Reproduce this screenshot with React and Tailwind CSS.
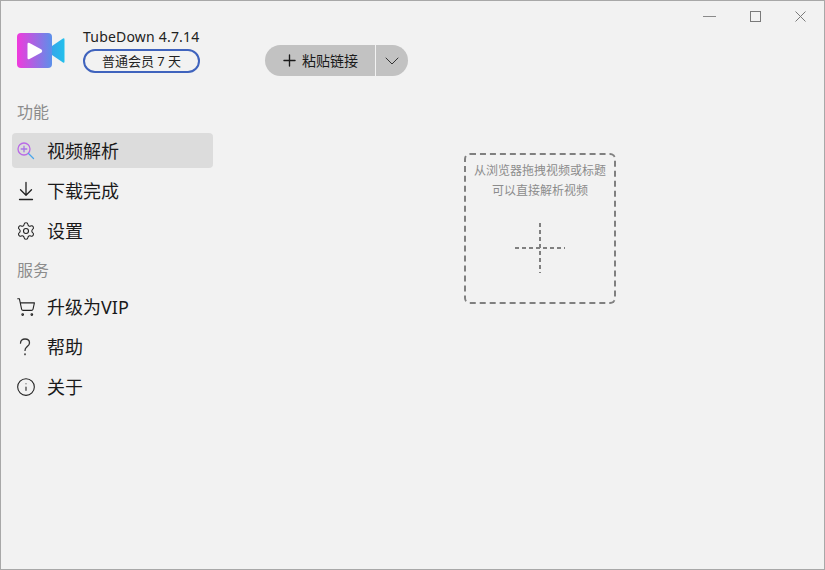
import React from 'react';
import { ChevronDown, Info, Plus, Settings, ShoppingCart } from 'lucide-react';

const font = 'font-["Noto_Sans","Noto_Sans_CJK_SC",sans-serif]';

function Logo() {
    return (
        <svg width="48" height="36" viewBox="0 0 48 36">
            <defs>
                <linearGradient id="logoBody" x1="0" y1="0" x2="1" y2="0">
                    <stop offset="0" stopColor="#f03adc" />
                    <stop offset="1" stopColor="#5b90ea" />
                </linearGradient>
                <linearGradient id="logoLens" x1="0" y1="0" x2="1" y2="0">
                    <stop offset="0" stopColor="#35a6ea" />
                    <stop offset="1" stopColor="#22c0ec" />
                </linearGradient>
            </defs>
            <rect x="0" y="1" width="35" height="35" rx="4" fill="url(#logoBody)" />
            <path d="M35 14 L46 6.5 Q47.5 5.8 47.5 7.5 V29.5 Q47.5 31.2 46 30.5 L35 23 Z" fill="url(#logoLens)" />
            <path d="M10.5 12 Q10.5 10 12.5 11 L24.5 17.5 Q26 19 24.5 20.5 L12.5 27 Q10.5 28 10.5 26 Z" fill="#ffffff" />
        </svg>
    );
}

function SearchPlusIcon() {
    return (
        <svg width="18" height="18" viewBox="0 0 18 18" fill="none" strokeWidth="1.3" strokeLinecap="round">
            <circle cx="7" cy="7" r="6" stroke="#b96ae6" />
            <path d="M4.2 7 H9.8 M7 4.2 V9.8" stroke="#a873e6" />
            <path d="M11.5 11.5 L16.5 16.5" stroke="#4aa6ea" />
        </svg>
    );
}

function DownloadIcon() {
    return (
        <svg width="18" height="20" viewBox="0 0 18 20" fill="none" stroke="#222" strokeWidth="1.3" strokeLinecap="round" strokeLinejoin="round">
            <path d="M9 1.5 V14 M3.5 8.8 L9 14.2 L14.5 8.8 M2.5 18.5 H15.5" />
        </svg>
    );
}

function HelpIcon() {
    return (
        <svg width="14" height="20" viewBox="0 0 14 20" fill="none" stroke="#333" strokeWidth="1.3" strokeLinecap="round" className="ml-px">
            <path d="M2.5 6.2 C2.5 3.4 4.5 2 7 2 C9.6 2 11.5 3.6 11.5 5.9 C11.5 8 10.2 8.9 8.8 9.9 C7.6 10.8 7 11.6 7 13.4" />
            <path d="M7 17 V17.6" strokeWidth="1.6" />
        </svg>
    );
}

function WindowControls() {
    return (
        <div className="flex justify-end items-center h-[31px] pr-[18px] gap-[34px]">
            <svg width="13" height="13" viewBox="0 0 13 13" stroke="#8a8a8a" strokeWidth="1">
                <path d="M0 6.5 H13" />
            </svg>
            <svg width="11" height="11" viewBox="0 0 11 11" fill="none" stroke="#7a7a7a" strokeWidth="1">
                <rect x="0.5" y="0.5" width="10" height="10" />
            </svg>
            <svg width="11" height="11" viewBox="0 0 11 11" stroke="#7a7a7a" strokeWidth="1">
                <path d="M0.5 0.5 L10.5 10.5 M10.5 0.5 L0.5 10.5" />
            </svg>
        </div>
    );
}

function NavItem({ icon, label, active }) {
    return (
        <div className={`flex items-center h-[35px] w-[201px] ml-[11px] pl-[5px] rounded-[4px] ${active ? 'bg-[#dcdcdc]' : ''}`}>
            <span className="w-[30px] flex items-center">{icon}</span>
            <span className="text-[18px] leading-none text-[#1a1a1a]">{label}</span>
        </div>
    );
}

function SectionLabel({ children }) {
    return <div className="ml-[16px] h-[20px] flex items-center text-[16px] leading-none text-[#8c8c8c]">{children}</div>;
}

export default function App() {
    return (
        <div className={`w-[825px] h-[570px] flex bg-[#f2f2f2] border border-[#a8a8a8] overflow-hidden ${font}`}>
            <aside className="w-[224px] shrink-0 flex flex-col">
                <div className="flex items-center gap-[18px] ml-[16px] mt-[26px]">
                    <Logo />
                    <div className="flex flex-col">
                        <div className="text-[14px] leading-[20px] text-[#222] tracking-[0.2px] whitespace-nowrap">TubeDown 4.7.14</div>
                        <div className="mt-[2px] w-[117px] h-[24px] rounded-full border-2 border-[#3f63bd] flex items-center justify-center text-[13px] leading-none text-[#222] whitespace-nowrap">
                            普通会员 7 天
                        </div>
                    </div>
                </div>

                <div className="mt-[29px]"><SectionLabel>功能</SectionLabel></div>
                <div className="mt-[11px] flex flex-col gap-[5px]">
                    <NavItem active icon={<SearchPlusIcon />} label="视频解析" />
                    <NavItem icon={<DownloadIcon />} label="下载完成" />
                    <NavItem icon={<Settings size={20} strokeWidth={1.3} color="#222" className="-ml-px" />} label="设置" />
                </div>
                <div className="mt-[12px]"><SectionLabel>服务</SectionLabel></div>
                <div className="mt-[9px] flex flex-col gap-[5px]">
                    <NavItem icon={<ShoppingCart size={20} strokeWidth={1.3} color="#222" className="-ml-px" />} label="升级为VIP" />
                    <NavItem icon={<HelpIcon />} label="帮助" />
                    <NavItem icon={<Info size={20} strokeWidth={1.3} color="#222" className="-ml-px" />} label="关于" />
                </div>
            </aside>

            <main className="flex-1 flex flex-col">
                <WindowControls />

                <div className="mt-[13px] ml-[40px] flex w-[143px] h-[31px] rounded-full overflow-hidden bg-[#c2c2c2]">
                    <div className="flex-1 flex items-center justify-center gap-[3px] pr-[2px] text-[14px] leading-none text-[#1a1a1a]">
                        <Plus size={19} strokeWidth={1.7} />
                        <span>粘贴链接</span>
                    </div>
                    <div className="w-[33px] flex items-center justify-center border-l border-[#f2f2f2]">
                        <ChevronDown size={24} strokeWidth={1} color="#333" />
                    </div>
                </div>

                <div className="mt-[77px] ml-[239px] w-[152px] h-[151px] rounded-[6px] border-2 border-dashed border-[#808080] flex flex-col items-center pt-[6px]">
                    <div className="text-[12px] leading-[20px] text-[#8c8c8c] text-center whitespace-nowrap">
                        <div>从浏览器拖拽视频或标题</div>
                        <div>可以直接解析视频</div>
                    </div>
                    <svg width="52" height="52" viewBox="0 0 52 52" className="mt-[21px]" stroke="#808080" strokeWidth="2" strokeDasharray="4 3">
                        <path d="M1 26 H51" />
                        <path d="M26 1 V51" />
                    </svg>
                </div>
            </main>
        </div>
    );
}
